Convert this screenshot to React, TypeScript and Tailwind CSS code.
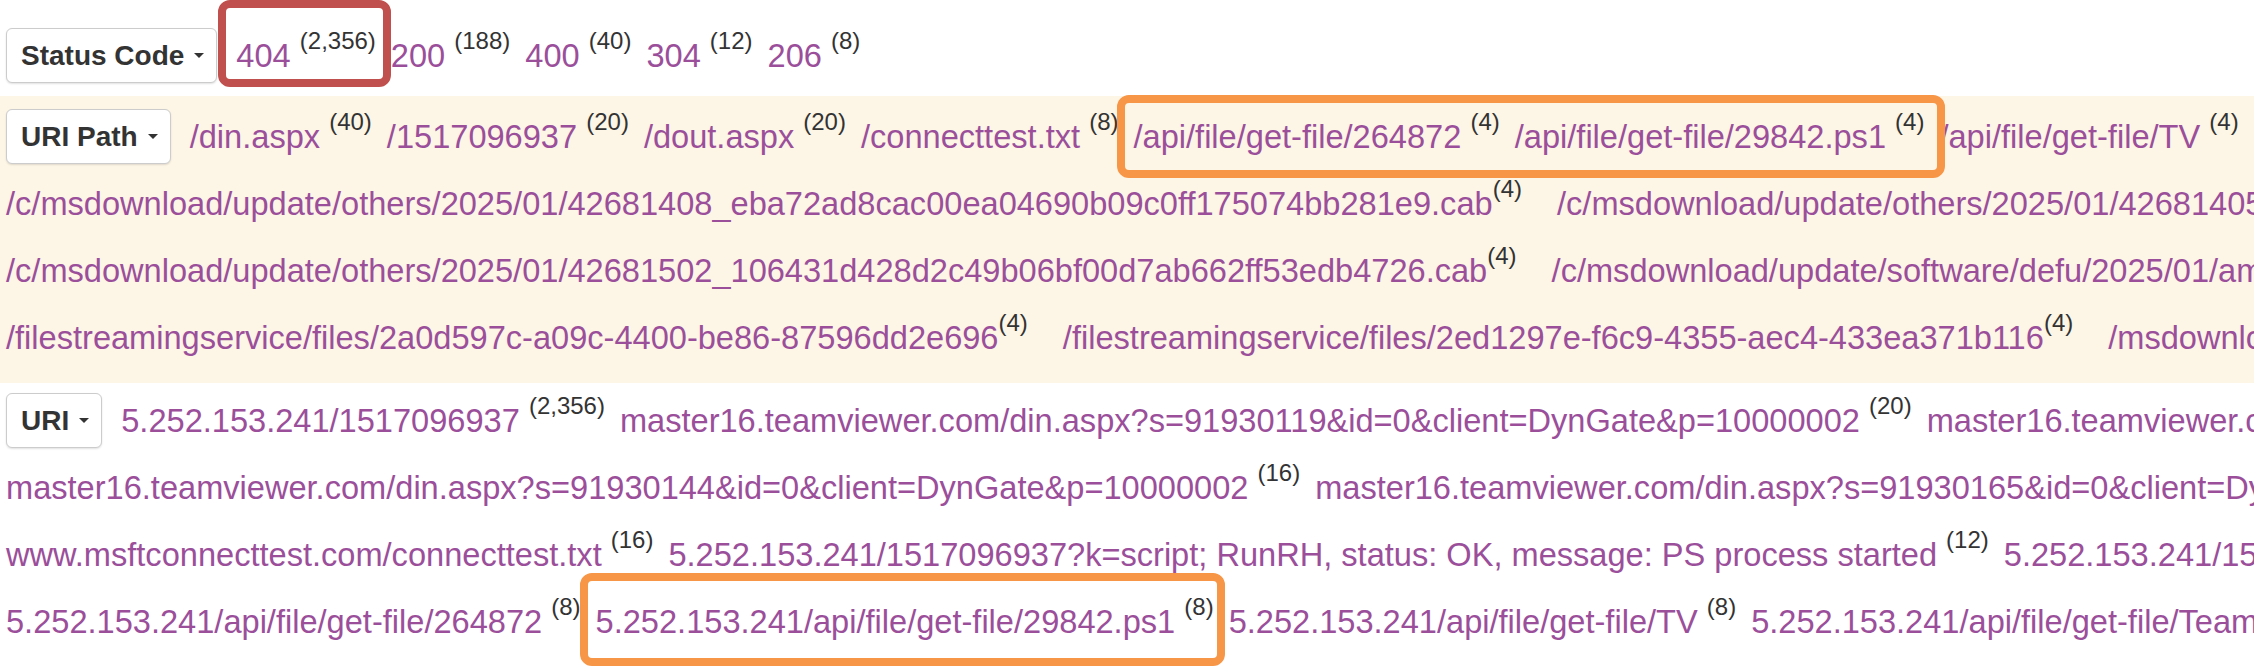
import type { ReactNode } from 'react';

type Entry = { label: string; count?: string; tight?: boolean };

function Item({ label, count, tight }: Entry) {
  return (
    <span className={`shrink-0 whitespace-nowrap ${tight ? 'mr-[20px]' : ''}`}>
      {label}
      {tight || !count ? '' : ' '}
      {count && <span className="relative -top-[18px] text-[24px] leading-none text-[#333]">({count})</span>}
    </span>
  );
}

function FieldButton({ label }: { label: string }) {
  return (
    <button className="mr-[4px] flex h-[55px] shrink-0 items-center gap-[10px] rounded-[6px] border border-[#ccc] bg-white pl-[14px] pr-[12px] text-[28px] font-bold leading-none text-[#333] shadow-[0_1px_2px_rgba(0,0,0,0.12)]">
      {label}
      <span className="h-0 w-0 border-x-[5px] border-t-[5px] border-x-transparent border-t-[#333]" />
    </button>
  );
}

// annotation frame drawn over the marked values
function Marked({ frame, children }: { frame: string; children: ReactNode }) {
  return (
    <span className="relative flex shrink-0 gap-[15px]">
      {children}
      <span className={`pointer-events-none absolute rounded-[12px] border-[8px] ${frame}`} />
    </span>
  );
}

function Row({ children }: { children: ReactNode }) {
  return <div className="flex h-[67px] items-center gap-[15px] whitespace-nowrap leading-[67px]">{children}</div>;
}

const statusCodes: Entry[] = [
  { label: '200', count: '188' },
  { label: '400', count: '40' },
  { label: '304', count: '12' },
  { label: '206', count: '8' }
];

export default function App() {
  return (
    <div className="h-screen w-full overflow-hidden bg-white font-['Liberation_Sans',Arial,sans-serif] text-[32.6px] text-[#9b4f9b]">
      <div className="px-[6px] pb-[7px] pt-[22px]">
        <Row>
          <FieldButton label="Status Code" />
          <Marked frame="-left-[18px] -right-[15px] -top-[22px] bottom-[2px] border-[#c0504d]">
            <Item label="404" count="2,356" />
          </Marked>
          {statusCodes.map((s) => (
            <Item key={s.label} {...s} />
          ))}
        </Row>
      </div>

      <div className="bg-[#fdf6e6] px-[6px] pb-[12px] pt-[7px]">
        <Row>
          <FieldButton label="URI Path" />
          <Item label="/din.aspx" count="40" />
          <Item label="/1517096937" count="20" />
          <Item label="/dout.aspx" count="20" />
          <Item label="/connecttest.txt" count="8" />
          <Marked frame="-left-[17px] -right-[21px] -top-[8px] -bottom-[8px] border-[#f79646]">
            <Item label="/api/file/get-file/264872" count="4" />
            <Item label="/api/file/get-file/29842.ps1" count="4" />
          </Marked>
          <Item label="/api/file/get-file/TV" count="4" />
        </Row>
        <Row>
          <Item label="/c/msdownload/update/others/2025/01/42681408_eba72ad8cac00ea04690b09c0ff175074bb281e9.cab" count="4" tight />
          <Item label="/c/msdownload/update/others/2025/01/42681405" />
        </Row>
        <Row>
          <Item label="/c/msdownload/update/others/2025/01/42681502_106431d428d2c49b06bf00d7ab662ff53edb4726.cab" count="4" tight />
          <Item label="/c/msdownload/update/software/defu/2025/01/am" />
        </Row>
        <Row>
          <Item label="/filestreamingservice/files/2a0d597c-a09c-4400-be86-87596dd2e696" count="4" tight />
          <Item label="/filestreamingservice/files/2ed1297e-f6c9-4355-aec4-433ea371b116" count="4" tight />
          <Item label="/msdownload" />
        </Row>
      </div>

      <div className="px-[6px] pt-[4px]">
        <Row>
          <FieldButton label="URI" />
          <Item label="5.252.153.241/1517096937" count="2,356" />
          <Item label="master16.teamviewer.com/din.aspx?s=91930119&id=0&client=DynGate&p=10000002" count="20" />
          <Item label="master16.teamviewer.com" />
        </Row>
        <Row>
          <Item label="master16.teamviewer.com/din.aspx?s=91930144&id=0&client=DynGate&p=10000002" count="16" />
          <Item label="master16.teamviewer.com/din.aspx?s=91930165&id=0&client=Dyn" />
        </Row>
        <Row>
          <Item label="www.msftconnecttest.com/connecttest.txt" count="16" />
          <Item label="5.252.153.241/1517096937?k=script; RunRH, status: OK, message: PS process started" count="12" />
          <Item label="5.252.153.241/1517" />
        </Row>
        <Row>
          <Item label="5.252.153.241/api/file/get-file/264872" count="8" />
          <Marked frame="-left-[16px] -right-[11px] -top-[15px] -bottom-[11px] border-[#f79646]">
            <Item label="5.252.153.241/api/file/get-file/29842.ps1" count="8" />
          </Marked>
          <Item label="5.252.153.241/api/file/get-file/TV" count="8" />
          <Item label="5.252.153.241/api/file/get-file/Team" />
        </Row>
      </div>
    </div>
  );
}
